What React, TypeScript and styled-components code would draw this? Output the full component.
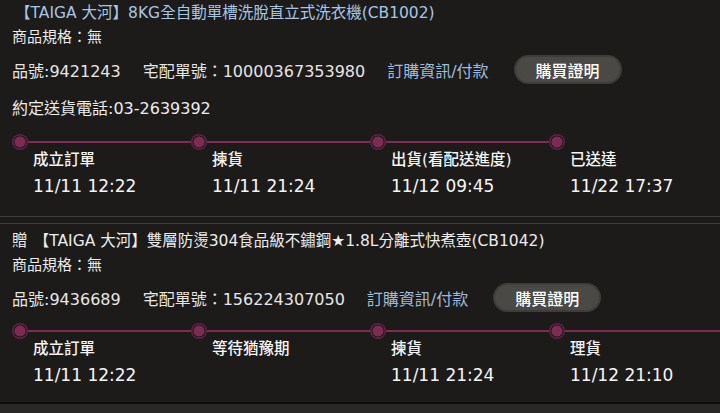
import React from 'react';
import styled, { createGlobalStyle } from 'styled-components';

interface Step {
  label: string;
  time?: string;
}

interface Order {
  title: string;
  highlight: boolean;
  sku: string;
  tracking: string;
  phone?: string;
  steps: Step[];
  continues: boolean;
}

const orders: Order[] = [
  {
    title: '【TAIGA 大河】8KG全自動單槽洗脫直立式洗衣機(CB1002)',
    highlight: true,
    sku: '9421243',
    tracking: '10000367353980',
    phone: '03-2639392',
    steps: [
      { label: '成立訂單', time: '11/11 12:22' },
      { label: '揀貨', time: '11/11 21:24' },
      { label: '出貨(看配送進度)', time: '11/12 09:45' },
      { label: '已送達', time: '11/22 17:37' },
    ],
    continues: false,
  },
  {
    title: '贈【TAIGA 大河】雙層防燙304食品級不鏽鋼★1.8L分離式快煮壺(CB1042)',
    highlight: false,
    sku: '9436689',
    tracking: '156224307050',
    steps: [
      { label: '成立訂單', time: '11/11 12:22' },
      { label: '等待猶豫期' },
      { label: '揀貨', time: '11/11 21:24' },
      { label: '理貨', time: '11/12 21:10' },
    ],
    continues: true,
  },
];

const GlobalStyle = createGlobalStyle`
  html, body {
    margin: 0;
    padding: 0;
    background: #1c1b1a;
  }
  body {
    font-family: "DejaVu Sans", "Noto Sans CJK TC", sans-serif;
    color: #eeeeee;
    overflow: hidden;
  }
`;

const Page = styled.div`
  width: 720px;
  height: 413px;
  overflow: hidden;
  display: flex;
  flex-direction: column;
  background: #1c1b1a;
`;

const Card = styled.section<{ $first?: boolean }>`
  display: flex;
  flex-direction: column;
  padding: ${(p) => (p.$first ? '3px' : '7px')} 0 0 12px;
`;

const Title = styled.div<{ $highlight: boolean }>`
  font-size: 15.5px;
  line-height: 20px;
  height: 20px;
  white-space: nowrap;
  color: ${(p) => (p.$highlight ? '#a9c5e4' : '#ececec')};
`;

// the original font leaves extra room in front of the opening bracket
const OpenBracket = styled.span<{ $lead: boolean }>`
  padding-left: ${(p) => (p.$lead ? '0.4em' : '0.2em')};
`;

const Spec = styled.div`
  margin-top: 4px;
  font-size: 15px;
  line-height: 20px;
  color: #ececec;
`;

const InfoRow = styled.div`
  margin-top: 8px;
  height: 29px;
  display: flex;
  align-items: center;
  gap: 22px;
  font-size: 16px;
  white-space: nowrap;
  color: #e6e6e6;
`;

const InfoLink = styled.span`
  color: #9fbadb;
`;

const ProofButton = styled.button`
  margin-left: 3px;
  width: 108px;
  height: 29px;
  border-radius: 15px;
  border: 2px solid #3f3d3a;
  background: #4b4945;
  color: #ffffff;
  font-family: "DejaVu Sans", "Noto Sans CJK TC", sans-serif;
  font-size: 16px;
  font-weight: 500;
  padding: 0;
`;

const Phone = styled.div`
  margin: 15px 0 4px;
  font-size: 16px;
  line-height: 20px;
  color: #ececec;
`;

const Timeline = styled.div`
  margin-top: 11px;
  display: flex;
`;

const StepCol = styled.div<{ $last: boolean }>`
  flex: ${(p) => (p.$last ? '1 0 179px' : '0 0 179px')};
  display: flex;
  flex-direction: column;
`;

const DotRow = styled.div`
  height: 16px;
  display: flex;
  align-items: center;
`;

const Dot = styled.span`
  flex: none;
  width: 16px;
  height: 16px;
  border-radius: 50%;
  background: radial-gradient(
    circle closest-side,
    #7c2b53 0 68%,
    #2a1920 70% 80%,
    #5b2341 83% 100%
  );
`;

const Line = styled.span<{ $hidden: boolean }>`
  flex: 1;
  height: 2px;
  background: ${(p) => (p.$hidden ? 'transparent' : '#7e2b54')};
`;

const StepLabel = styled.div`
  padding-left: 21px;
  font-size: 15.5px;
  line-height: 20px;
  height: 20px;
  color: #f6f6f6;
  font-weight: 500;
  white-space: nowrap;
`;

const StepTime = styled.div`
  margin-top: 6px;
  padding-left: 21px;
  font-size: 17px;
  line-height: 21px;
  height: 21px;
  color: #f6f6f6;
  white-space: nowrap;
`;

const Divider = styled.div`
  margin-top: 19px;
  height: 6px;
  border-top: 1px solid #3e3c3a;
  border-bottom: 1px solid #3e3c3a;
`;

const NextCard = styled.div`
  margin-top: 16px;
  flex: 1;
  border-top: 2px solid #0f0e0e;
  background: #2a2826;
`;

function renderTitle(text: string) {
  return text.split(/(【)/).map((part, i) => {
    if (part == '【') {
      return (
        <OpenBracket key={i} $lead={text.indexOf('【') > 0}>
          {part}
        </OpenBracket>
      );
    }
    return <React.Fragment key={i}>{part}</React.Fragment>;
  });
}

function OrderCard({ order, first }: { order: Order; first?: boolean }) {
  return (
    <Card $first={first}>
      <Title $highlight={order.highlight}>{renderTitle(order.title)}</Title>
      <Spec>商品規格：無</Spec>
      <InfoRow>
        <span>品號:{order.sku}</span>
        <span>宅配單號：{order.tracking}</span>
        <InfoLink>訂購資訊/付款</InfoLink>
        <ProofButton>購買證明</ProofButton>
      </InfoRow>
      {order.phone && <Phone>約定送貨電話:{order.phone}</Phone>}
      <Timeline>
        {order.steps.map((step, i) => {
          const last = i == order.steps.length - 1;
          return (
            <StepCol key={i} $last={last}>
              <DotRow>
                <Dot />
                <Line $hidden={last && !order.continues} />
              </DotRow>
              <StepLabel>{step.label}</StepLabel>
              <StepTime>{step.time ?? ''}</StepTime>
            </StepCol>
          );
        })}
      </Timeline>
    </Card>
  );
}

export default function App() {
  return (
    <Page>
      <GlobalStyle />
      <OrderCard order={orders[0]} first />
      <Divider />
      <OrderCard order={orders[1]} />
      <NextCard />
    </Page>
  );
}
